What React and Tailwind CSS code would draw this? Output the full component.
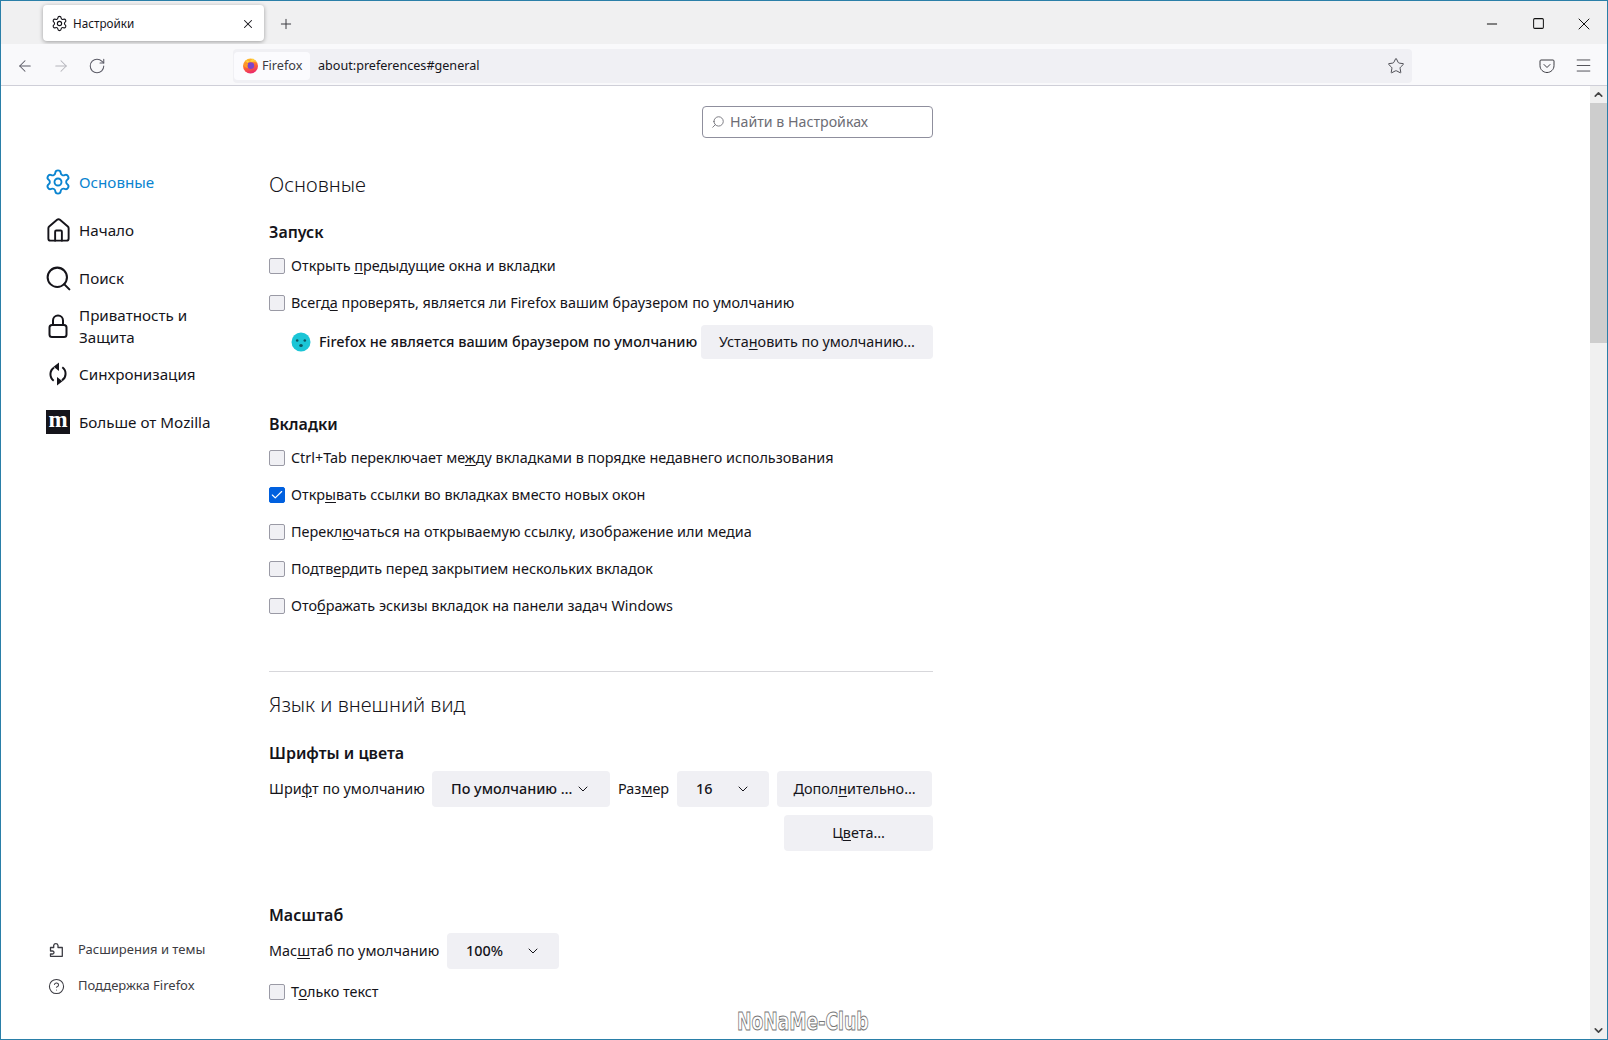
import { Settings, Plus, X, ArrowLeft, ArrowRight, RotateCw, Star, Menu, Minus, Square, ChevronDown, ChevronUp, Search, House, CircleHelp, Check } from 'lucide-react';

const uiFont = 'font-["Noto_Sans",sans-serif]';

// Логотип Firefox
const FirefoxLogo = () => (
  <svg width="17" height="17" viewBox="0 0 17 17">
    <defs>
      <linearGradient id="fx" x1="0.3" y1="0" x2="0.6" y2="1">
        <stop offset="0" stopColor="#ffc42e" />
        <stop offset="0.5" stopColor="#ff6a30" />
        <stop offset="1" stopColor="#e9246f" />
      </linearGradient>
    </defs>
    <circle cx="8.5" cy="9" r="7.5" fill="url(#fx)" />
    <path d="M3 3 L5.5 6 L11 1.500 L15.500 6 Q12.500 3.500 10 5 Z" fill="#ffd43a" />
    <circle cx="8.8" cy="8.6" r="3.4" fill="#7d45c9" />
    <path d="M1.5 8 Q4 5.5 6 7 Q4.5 9 6 11 Q3 11.5 1.5 8Z" fill="#ff9b26" />
  </svg>
);

const SadFace = () => (
  <svg width="20" height="20" viewBox="0 0 20 20">
    <circle cx="10" cy="10" r="9.5" fill="#1bc5d6" />
    <circle cx="6.2" cy="8.5" r="1.3" fill="#0b5561" />
    <circle cx="13.8" cy="8.5" r="1.3" fill="#0b5561" />
    <ellipse cx="10" cy="13.6" rx="1.8" ry="1.5" fill="#0b5561" />
  </svg>
);

const PocketIcon = () => (
  <svg width="16" height="16" viewBox="0 0 16 16" fill="none" stroke="#3c3c43" strokeWidth="1">
    <path d="M2 2h12c.6 0 1 .4 1 1v4.700c0 3.800-3.200 6.800-7 6.800S1 11.500 1 7.700V3c0-.6.4-1 1-1z" />
    <path d="M5 6.500l3 3 3-3" strokeLinecap="round" strokeLinejoin="round" />
  </svg>
);

const SyncIcon = () => (
  <svg width="24" height="24" viewBox="0 0 24 24" fill="none" stroke="#15141a" strokeWidth="2">
    <path d="M8 5.600A8 8 0 0 0 7.700 18.700" />
    <path d="M16 18.400A8 8 0 0 0 16.300 5.300" />
    <path d="M13 0.500v8.500L7.500 4.800z" fill="#15141a" stroke="none" />
    <path d="M11 23.500V15l5.500 4.200z" fill="#15141a" stroke="none" />
  </svg>
);

const LockIcon = () => (
  <svg width="24" height="24" viewBox="0 0 24 24" fill="none" stroke="#15141a" strokeWidth="2">
    <rect x="3.500" y="11" width="17" height="12" rx="2.500" />
    <path d="M7 11V6.500a5 5 0 0 1 10 0V11" />
  </svg>
);

const MozillaIcon = () => (
  <div className="w-6 h-6 bg-[#15141a] flex items-center justify-center">
    <span className='text-white text-[23px] font-bold leading-none font-["Liberation_Serif",serif] -mt-[5px]'>m</span>
  </div>
);

const PuzzleIcon = () => (
  <svg width="16" height="16" viewBox="0 0 16 16" fill="none" stroke="#3c3c43" strokeWidth="1.3" strokeLinejoin="round">
    <path d="M5.700 14.300H14.300V5.500H10V3.300A2.200 2.200 0 0 0 5.700 3.300V5.500H2.500V9H4.500A1.500 1.500 0 0 1 4.500 12H2.500V14.300Z" />
  </svg>
);

const Mn = ({ a, u, b }) => (
  <span className="whitespace-nowrap">
    {a}
    <u className="underline-offset-2">{u}</u>
    {b}
  </span>
);

const CheckRow = ({ checked, children }) => (
  <div className="h-[37px] flex items-center text-[14.4px] text-[#15141a]">
    <div
      className={
        'w-4 h-4 rounded-[2px] border flex items-center justify-center ' +
        (checked ? 'bg-[#0060df] border-[#0060df]' : 'bg-[#f0f0f4] border-[#9a9aa5]')
      }
    >
      {checked && <Check size={14} color="white" strokeWidth={2} />}
    </div>
    <span className="ml-[6px]">{children}</span>
  </div>
);

const Btn = ({ className, children }) => (
  <div className={'h-[36px] shrink-0 rounded-[4px] bg-[#f0f0f4] flex items-center text-[14.4px] text-[#15141a] whitespace-nowrap ' + className}>
    {children}
  </div>
);

const NavItem = ({ icon, active, children }) => (
  <div className={'h-12 flex items-center gap-[9px] text-[15.2px] leading-[22.500px] ' + (active ? 'text-[#0a84d0]' : 'text-[#15141a]')}>
    <div className="w-6 h-6 flex items-center justify-center shrink-0">{icon}</div>
    <span>{children}</span>
  </div>
);

const H1 = ({ className, children }) => (
  <div className={'h-8 flex items-center text-[20.2px] font-light text-[#15141a] ' + className}>{children}</div>
);

const H2 = ({ className, children }) => (
  <div className={'h-6 flex items-center text-[16px] font-semibold text-[#15141a] ' + className}>{children}</div>
);

export default function App() {
  return (
    <div className={'relative h-[1040px] w-[1608px] border border-[#2a7fa8] flex flex-col overflow-hidden bg-white ' + uiFont}>
      {/* вкладки */}
      <div className="h-[43px] shrink-0 bg-[#f0f0f1] flex items-start">
        <div className="ml-[42px] mt-[4px] w-[221px] h-[36px] bg-white rounded-[4px] shadow-[0_1px_4px_rgba(0,0,0,0.35)] flex items-center pl-[8px] pr-[8px] pt-[1px]">
          <Settings size={17} color="#15141a" strokeWidth={1.6} />
          <span className="ml-[5px] text-[11.7px] text-[#15141a]">Настройки</span>
          <X size={14} color="#15141a" strokeWidth={1.8} className="ml-auto mr-[1px]" />
        </div>
        <Plus size={16} color="#3c3c43" strokeWidth={1.500} className="ml-[14px] mt-[15px]" />
        <div className="ml-auto flex items-center h-[45px]">
          <div className="w-[46px] flex justify-center"><Minus size={16} color="#111" strokeWidth={1.5} /></div>
          <div className="w-[46px] flex justify-center"><Square size={13} color="#111" strokeWidth={1.85} /></div>
          <div className="w-[46px] flex justify-center"><X size={20} color="#111" strokeWidth={1.2} /></div>
        </div>
      </div>

      {/* панель адреса */}
      <div className="h-[42px] shrink-0 bg-[#f9f9fb] border-b border-[#cfcfd8] flex items-center pt-[2px]">
        <div className="w-[232px] flex items-center pl-[15px] gap-[18px] shrink-0">
          <ArrowLeft size={18} color="#5b5b66" strokeWidth={1.400} />
          <ArrowRight size={18} color="#b5b5bb" strokeWidth={1.400} />
          <RotateCw size={18} color="#5b5b66" strokeWidth={1.400} />
        </div>
        <div className="w-[1179px] h-[34px] bg-[#f0f0f4] rounded-[4px] flex items-center pl-[1px]">
          <div className="h-[28px] w-[76px] bg-[#fbfbfe] rounded-[4px] flex items-center pl-[8px] text-[12.7px] text-[#3c3c43]">
            <FirefoxLogo />
            <span className="ml-[3px]">Firefox</span>
          </div>
          <span className="ml-[8px] pt-[1px] text-[12.6px] text-[#15141a]">about:preferences#general</span>
          <Star size={18} color="#3c3c43" strokeWidth={1.200} className="ml-auto mr-[7px]" />
        </div>
        <div className="ml-auto flex items-center gap-[19px] pr-[14px]">
          <PocketIcon />
          <Menu size={19} color="#3c3c43" strokeWidth={1.100} />
        </div>
      </div>

      <div className="flex-1 flex min-h-0">
        {/* боковое меню */}
        <div className="w-[268px] shrink-0 flex flex-col pl-[45px] pt-[72px] pb-[35px]">
          <NavItem active icon={<Settings size={28} color="#0a84d0" strokeWidth={1.600} className="shrink-0" />}>Основные</NavItem>
          <NavItem icon={<House size={27} color="#15141a" strokeWidth={1.700} className="shrink-0" />}>Начало</NavItem>
          <NavItem icon={<Search size={29} color="#15141a" strokeWidth={1.700} className="shrink-0" />}>Поиск</NavItem>
          <NavItem icon={<LockIcon />}>
            Приватность и<br />Защита
          </NavItem>
          <NavItem icon={<SyncIcon />}>Синхронизация</NavItem>
          <NavItem icon={<MozillaIcon />}>Больше от Mozilla</NavItem>
          <div className="mt-auto">
            <div className="h-9 flex items-center text-[13px] text-[#3c3c43]">
              <div className="ml-[2px] w-4 flex justify-center"><PuzzleIcon /></div>
              <span className="ml-[14px]">Расширения и темы</span>
            </div>
            <div className="h-9 flex items-center text-[13px] text-[#3c3c43]">
              <div className="ml-[2px] w-4 flex justify-center"><CircleHelp size={17} color="#3c3c43" strokeWidth={1.500} className="shrink-0" /></div>
              <span className="ml-[14px]">Поддержка Firefox</span>
            </div>
          </div>
        </div>

        {/* содержимое */}
        <div className="w-[664px] shrink-0 pt-[20px]">
          <div className="ml-auto w-[231px] h-8 border border-[#8f8f9d] rounded-[4px] flex items-center pl-[8px] text-[14.2px] text-[#6d6d75]">
            <Search size={14} color="#6d6d75" strokeWidth={1.500} className="-scale-x-100" />
            <span className="ml-[5px]">Найти в Настройках</span>
          </div>

          <H1 className="mt-[30px]">Основные</H1>
          <H2 className="mt-[20px]">Запуск</H2>
          <div className="mt-[3px]">
            <CheckRow><Mn a="Открыть " u="п" b="редыдущие окна и вкладки" /></CheckRow>
            <CheckRow><Mn a="Всегд" u="а" b=" проверять, является ли Firefox вашим браузером по умолчанию" /></CheckRow>
          </div>
          <div className="mt-[4px] h-[34px] flex items-center text-[14.4px] font-medium text-[#15141a] whitespace-nowrap">
            <div className="ml-[22px]"><SadFace /></div>
            <span className="ml-[8px]">Firefox не является вашим браузером по умолчанию</span>
            <Btn className="ml-auto !h-[34px] w-[232px] justify-center font-normal">
              <Mn a="Уста" u="н" b="овить по умолчанию…" />
            </Btn>
          </div>

          <H2 className="mt-[53px]">Вкладки</H2>
          <div className="mt-[3px]">
            <CheckRow><Mn a="Ctrl+Tab переключает ме" u="ж" b="ду вкладками в порядке недавнего использования" /></CheckRow>
            <CheckRow checked><Mn a="Откр" u="ы" b="вать ссылки во вкладках вместо новых окон" /></CheckRow>
            <CheckRow><Mn a="Перекл" u="ю" b="чаться на открываемую ссылку, изображение или медиа" /></CheckRow>
            <CheckRow><Mn a="Подтв" u="е" b="рдить перед закрытием нескольких вкладок" /></CheckRow>
            <CheckRow><Mn a="Ото" u="б" b="ражать эскизы вкладок на панели задач Windows" /></CheckRow>
          </div>

          <div className="mt-[47px] h-px bg-[#d7d7db]" />
          <H1 className="mt-[16px]">Язык и внешний вид</H1>
          <H2 className="mt-[21px]">Шрифты и цвета</H2>
          <div className="mt-[6px] flex items-center text-[14.4px] text-[#15141a]">
            <div className="w-[163px] shrink-0"><Mn a="Шри" u="ф" b="т по умолчанию" /></div>
            <Btn className="w-[178px] pl-[19px] font-medium">
              По умолчанию …
              <ChevronDown size={16} color="#15141a" strokeWidth={1.500} className="ml-[3px]" />
            </Btn>
            <div className="ml-[8px] w-[51px] shrink-0"><Mn a="Раз" u="м" b="ер" /></div>
            <Btn className="ml-[8px] w-[92px] pl-[19px] font-medium">
              16
              <ChevronDown size={16} color="#15141a" strokeWidth={1.500} className="ml-auto mr-[18px]" />
            </Btn>
            <Btn className="ml-[8px] w-[155px] justify-center">
              <Mn a="Допол" u="н" b="ительно…" />
            </Btn>
          </div>
          <Btn className="mt-[8px] ml-auto w-[149px] justify-center">
            <Mn a="Ц" u="в" b="ета…" />
          </Btn>

          <H2 className="mt-[52px]">Масштаб</H2>
          <div className="mt-[6px] flex items-center text-[14.4px] text-[#15141a]">
            <div className="w-[178px] shrink-0"><Mn a="Мас" u="ш" b="таб по умолчанию" /></div>
            <Btn className="w-[112px] pl-[19px] font-medium">
              100%
              <ChevronDown size={16} color="#15141a" strokeWidth={1.500} className="ml-auto mr-[18px]" />
            </Btn>
          </div>
          <div className="mt-[4px]">
            <CheckRow><Mn a="Т" u="о" b="лько текст" /></CheckRow>
          </div>
        </div>

        {/* полоса прокрутки */}
        <div className="ml-auto w-[17px] shrink-0 bg-[#f0f0f0] flex flex-col items-center">
          <div className="h-[17px] flex items-center"><ChevronUp size={13} color="#444" strokeWidth={3} /></div>
          <div className="w-full h-[240px] bg-[#cdcdcd]" />
          <div className="mt-auto h-[17px] flex items-center"><ChevronDown size={13} color="#444" strokeWidth={3} /></div>
        </div>
      </div>

      {/* водяной знак */}
      <div className='absolute left-[736px] top-[1008px] origin-left scale-x-[0.69] text-[25px] leading-none font-bold text-white [-webkit-text-stroke:1px_#777] font-["DejaVu_Sans",sans-serif]'>
        NoNaMe-Club
      </div>
    </div>
  );
}
